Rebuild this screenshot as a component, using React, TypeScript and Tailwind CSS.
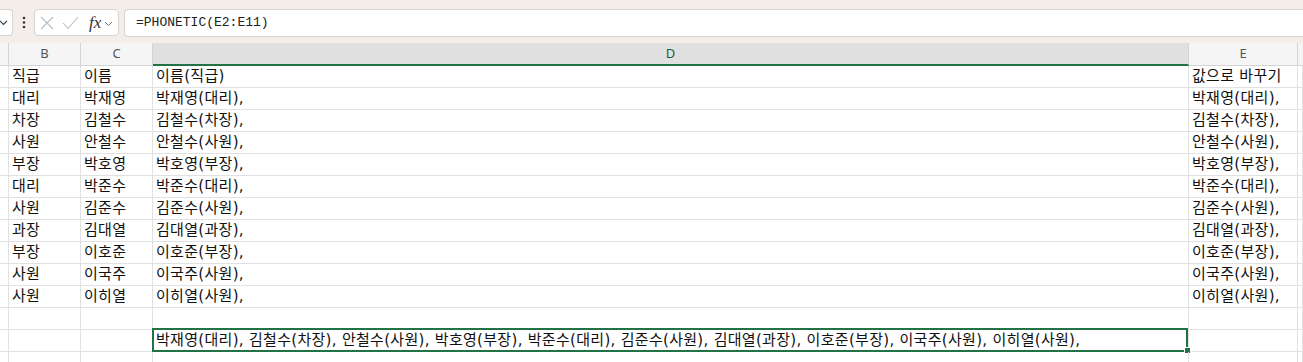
import React from "react";

const rows: [string, string][] = [
  ["대리", "박재영"],
  ["차장", "김철수"],
  ["사원", "안철수"],
  ["부장", "박호영"],
  ["대리", "박준수"],
  ["사원", "김준수"],
  ["과장", "김대열"],
  ["부장", "이호준"],
  ["사원", "이국주"],
  ["사원", "이히열"],
];

const joined = rows.map(([r, n]) => `${n}(${r}),`).join(" ");

const cell = "h-[22px] border-r border-b border-[#e1e1e1] shrink-0 flex items-center overflow-visible whitespace-nowrap pl-[3px]";

function Row({ b, c, d, e, children }: { b?: string; c?: string; d?: string; e?: string; children?: React.ReactNode }) {
  return (
    <div className="flex">
      <div className={`${cell} w-[9px]`} />
      <div className={`${cell} w-[72px]`}>{b}</div>
      <div className={`${cell} w-[72px]`}>{c}</div>
      <div className={`${cell} w-[1036px] relative`}>
        {d}
        {children}
      </div>
      <div className={`${cell} w-[109px]`}>{e}</div>
      <div className={`${cell} flex-1`} />
    </div>
  );
}

function HeaderCell({ label, w, active }: { label?: string; w: string; active?: boolean }) {
  return (
    <div
      className={`h-[23px] shrink-0 flex items-center justify-center border-r border-[#d4d4d4] ${w} ${
        active ? "bg-[#e0e0e0] text-[#1f5c3c] border-b-2 border-b-[#217346]" : "bg-[#f5f5f5] text-[#555] border-b border-b-[#d4d4d4]"
      }`}
    >
      {label}
    </div>
  );
}

export default function App() {
  return (
    <div className="w-[1303px] h-[362px] overflow-hidden bg-white">
      {/* formula bar */}
      <div className="h-[43px] bg-[#f3eee9] flex items-start pt-[9px]">
        <div className="w-[13px] h-[27px] bg-white border border-l-0 border-[#d8d3ce] rounded-r-[4px] flex items-center">
          <svg width="9" height="9" viewBox="0 0 9 9" className="ml-[-1px]">
            <path d="M1 3 L4.5 6.5 L8 3" fill="none" stroke="#444" strokeWidth="1.2" />
          </svg>
        </div>
        <div className="w-[21px] h-[27px] flex items-center justify-center">
          <svg width="4" height="13" viewBox="0 0 4 13">
            <circle cx="2" cy="2" r="1.3" fill="#333" />
            <circle cx="2" cy="6.5" r="1.3" fill="#333" />
            <circle cx="2" cy="11" r="1.3" fill="#333" />
          </svg>
        </div>
        <div className="w-[85px] h-[27px] bg-white border border-[#d8d3ce] rounded-[4px] flex items-center">
          <svg width="16" height="16" viewBox="0 0 16 16" className="ml-[4px]">
            <path d="M2 2 L14 14 M14 2 L2 14" stroke="#bdbdbd" strokeWidth="1.1" fill="none" />
          </svg>
          <svg width="17" height="14" viewBox="0 0 17 14" className="ml-[7px]">
            <path d="M1 7 L6 12.5 L16 1" stroke="#bdbdbd" strokeWidth="1.1" fill="none" />
          </svg>
          <span className="ml-[10px] text-[17px] italic text-[#333] leading-none" style={{ fontFamily: '"Liberation Serif", serif' }}>
            fx
          </span>
          <svg width="9" height="9" viewBox="0 0 9 9" className="ml-[3px] mt-[2px]">
            <path d="M1 3 L4.5 6.5 L8 3" fill="none" stroke="#777" strokeWidth="1" />
          </svg>
        </div>
        <div className="ml-[5px] flex-1 h-[28px] bg-white border border-r-0 border-[#d8d3ce] rounded-l-[4px] flex items-center pl-[11px]">
          <span className="text-[13px] text-[#222]" style={{ fontFamily: '"Liberation Mono", monospace' }}>
            =PHONETIC(E2:E11)
          </span>
        </div>
      </div>

      {/* column headers */}
      <div className="flex text-[13px]" style={{ fontFamily: '"Noto Sans", sans-serif' }}>
        <HeaderCell w="w-[9px]" />
        <HeaderCell w="w-[72px]" label="B" />
        <HeaderCell w="w-[72px]" label="C" />
        <HeaderCell w="w-[1036px]" label="D" active />
        <HeaderCell w="w-[109px]" label="E" />
        <div className="h-[23px] flex-1 bg-[#f5f5f5] border-b border-[#d4d4d4]" />
      </div>

      {/* grid */}
      <div className="text-[15px] tracking-[0.3px] text-[#111]" style={{ fontFamily: '"DejaVu Sans", "Noto Sans CJK KR", sans-serif' }}>
        <Row b="직급" c="이름" d="이름(직급)" e="값으로 바꾸기" />
        {rows.map(([r, n], i) => (
          <Row key={i} b={r} c={n} d={`${n}(${r}),`} e={`${n}(${r}),`} />
        ))}
        <Row />
        <Row d={joined}>
          <div className="absolute top-[-2px] left-[-1px] right-0 bottom-[-1px] border-2 border-[#217346] pointer-events-none" />
          <div className="absolute right-[-3px] bottom-[-3px] w-[7px] h-[7px] bg-[#217346] border border-white" />
        </Row>
        <Row />
      </div>
    </div>
  );
}
